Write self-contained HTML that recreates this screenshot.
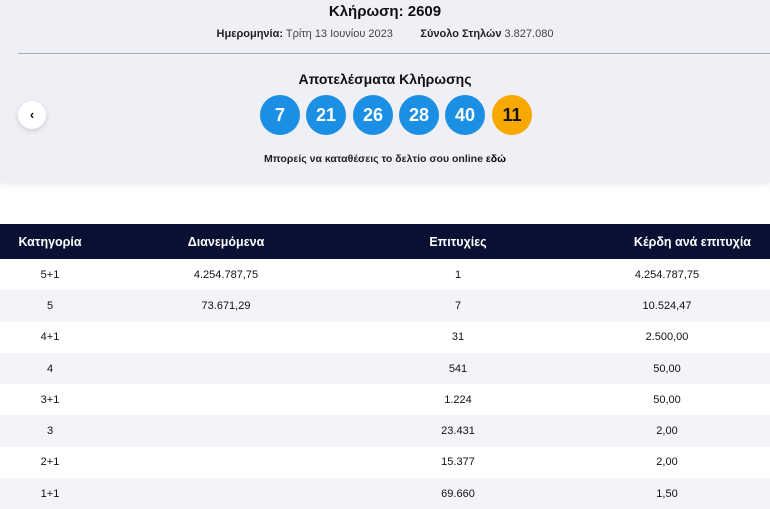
<!DOCTYPE html>
<html><head><meta charset="utf-8"><style>
*{margin:0;padding:0;box-sizing:border-box}
body{width:770px;height:509px;overflow:hidden;background:#fff;font-family:"Liberation Sans",sans-serif;color:#111;position:relative}
.top{position:absolute;left:0;top:0;width:770px;height:182px;background:#eef0f6;box-shadow:0 3px 6px rgba(0,0,0,.08)}
.t{position:absolute;width:770px;text-align:center}
.line{position:absolute;left:18px;top:53px;width:752px;height:1px;background:#a9adb8}
.ball{position:absolute;top:95px;width:40px;height:40px;border-radius:50%;background:#1a8fe3;color:#fff;font-weight:bold;font-size:18px;line-height:40px;text-align:center}
.back{position:absolute;left:18px;top:101px;width:28px;height:28px;border-radius:50%;background:#fff;box-shadow:0 2px 6px rgba(0,0,0,.15);font-size:13px;text-align:center;line-height:27px;font-weight:bold}
table{position:absolute;top:224px;left:0;width:770px;border-collapse:collapse}
th{background:#0a1033;color:#fff;font-size:12.5px;height:35px;font-weight:bold}
td{font-size:11px;height:31.3px;text-align:center}
tr:nth-child(odd) td{background:#f3f4f7}
</style></head><body>
<div class="top">
<div class="t" style="top:3px;font-size:15px;font-weight:bold">Κλήρωση: 2609</div>
<div class="t" style="top:28px;font-size:11px;color:#444"><b style="color:#222">Ημερομηνία:</b> Τρίτη 13 Ιουνίου 2023 &nbsp;&nbsp;&nbsp;&nbsp;&nbsp;&nbsp;&nbsp; <b style="color:#222">Σύνολο Στηλών</b> 3.827.080</div>
<div class="line"></div>
<div class="t" style="top:71px;font-size:14px;font-weight:bold">Αποτελέσματα Κλήρωσης</div>
<div class="ball" style="left:260px">7</div>
<div class="ball" style="left:306px">21</div>
<div class="ball" style="left:353px">26</div>
<div class="ball" style="left:399px">28</div>
<div class="ball" style="left:445px">40</div>
<div class="ball" style="left:492px;background:#f9a800;color:#111">11</div>
<div class="t" style="top:153px;font-size:10.5px;font-weight:bold;color:#222">Μπορείς να καταθέσεις το δελτίο σου online <span style="color:#000">εδώ</span></div>
<div class="back">‹</div>
</div>
<table>
<colgroup><col style="width:100px"><col style="width:252px"><col style="width:212px"><col></colgroup>
<tr><th>Κατηγορία</th><th>Διανεμόμενα</th><th>Επιτυχίες</th><th style="text-align:right;padding-right:19px">Κέρδη ανά επιτυχία</th></tr>
<tr><td>5+1</td><td>4.254.787,75</td><td>1</td><td>4.254.787,75</td></tr>
<tr><td>5</td><td>73.671,29</td><td>7</td><td>10.524,47</td></tr>
<tr><td>4+1</td><td></td><td>31</td><td>2.500,00</td></tr>
<tr><td>4</td><td></td><td>541</td><td>50,00</td></tr>
<tr><td>3+1</td><td></td><td>1.224</td><td>50,00</td></tr>
<tr><td>3</td><td></td><td>23.431</td><td>2,00</td></tr>
<tr><td>2+1</td><td></td><td>15.377</td><td>2,00</td></tr>
<tr><td>1+1</td><td></td><td>69.660</td><td>1,50</td></tr>
</table>
<style>tr:nth-child(even) td{background:#fff}tr:nth-child(odd) td{background:#f3f4f7}</style>
</body></html>
